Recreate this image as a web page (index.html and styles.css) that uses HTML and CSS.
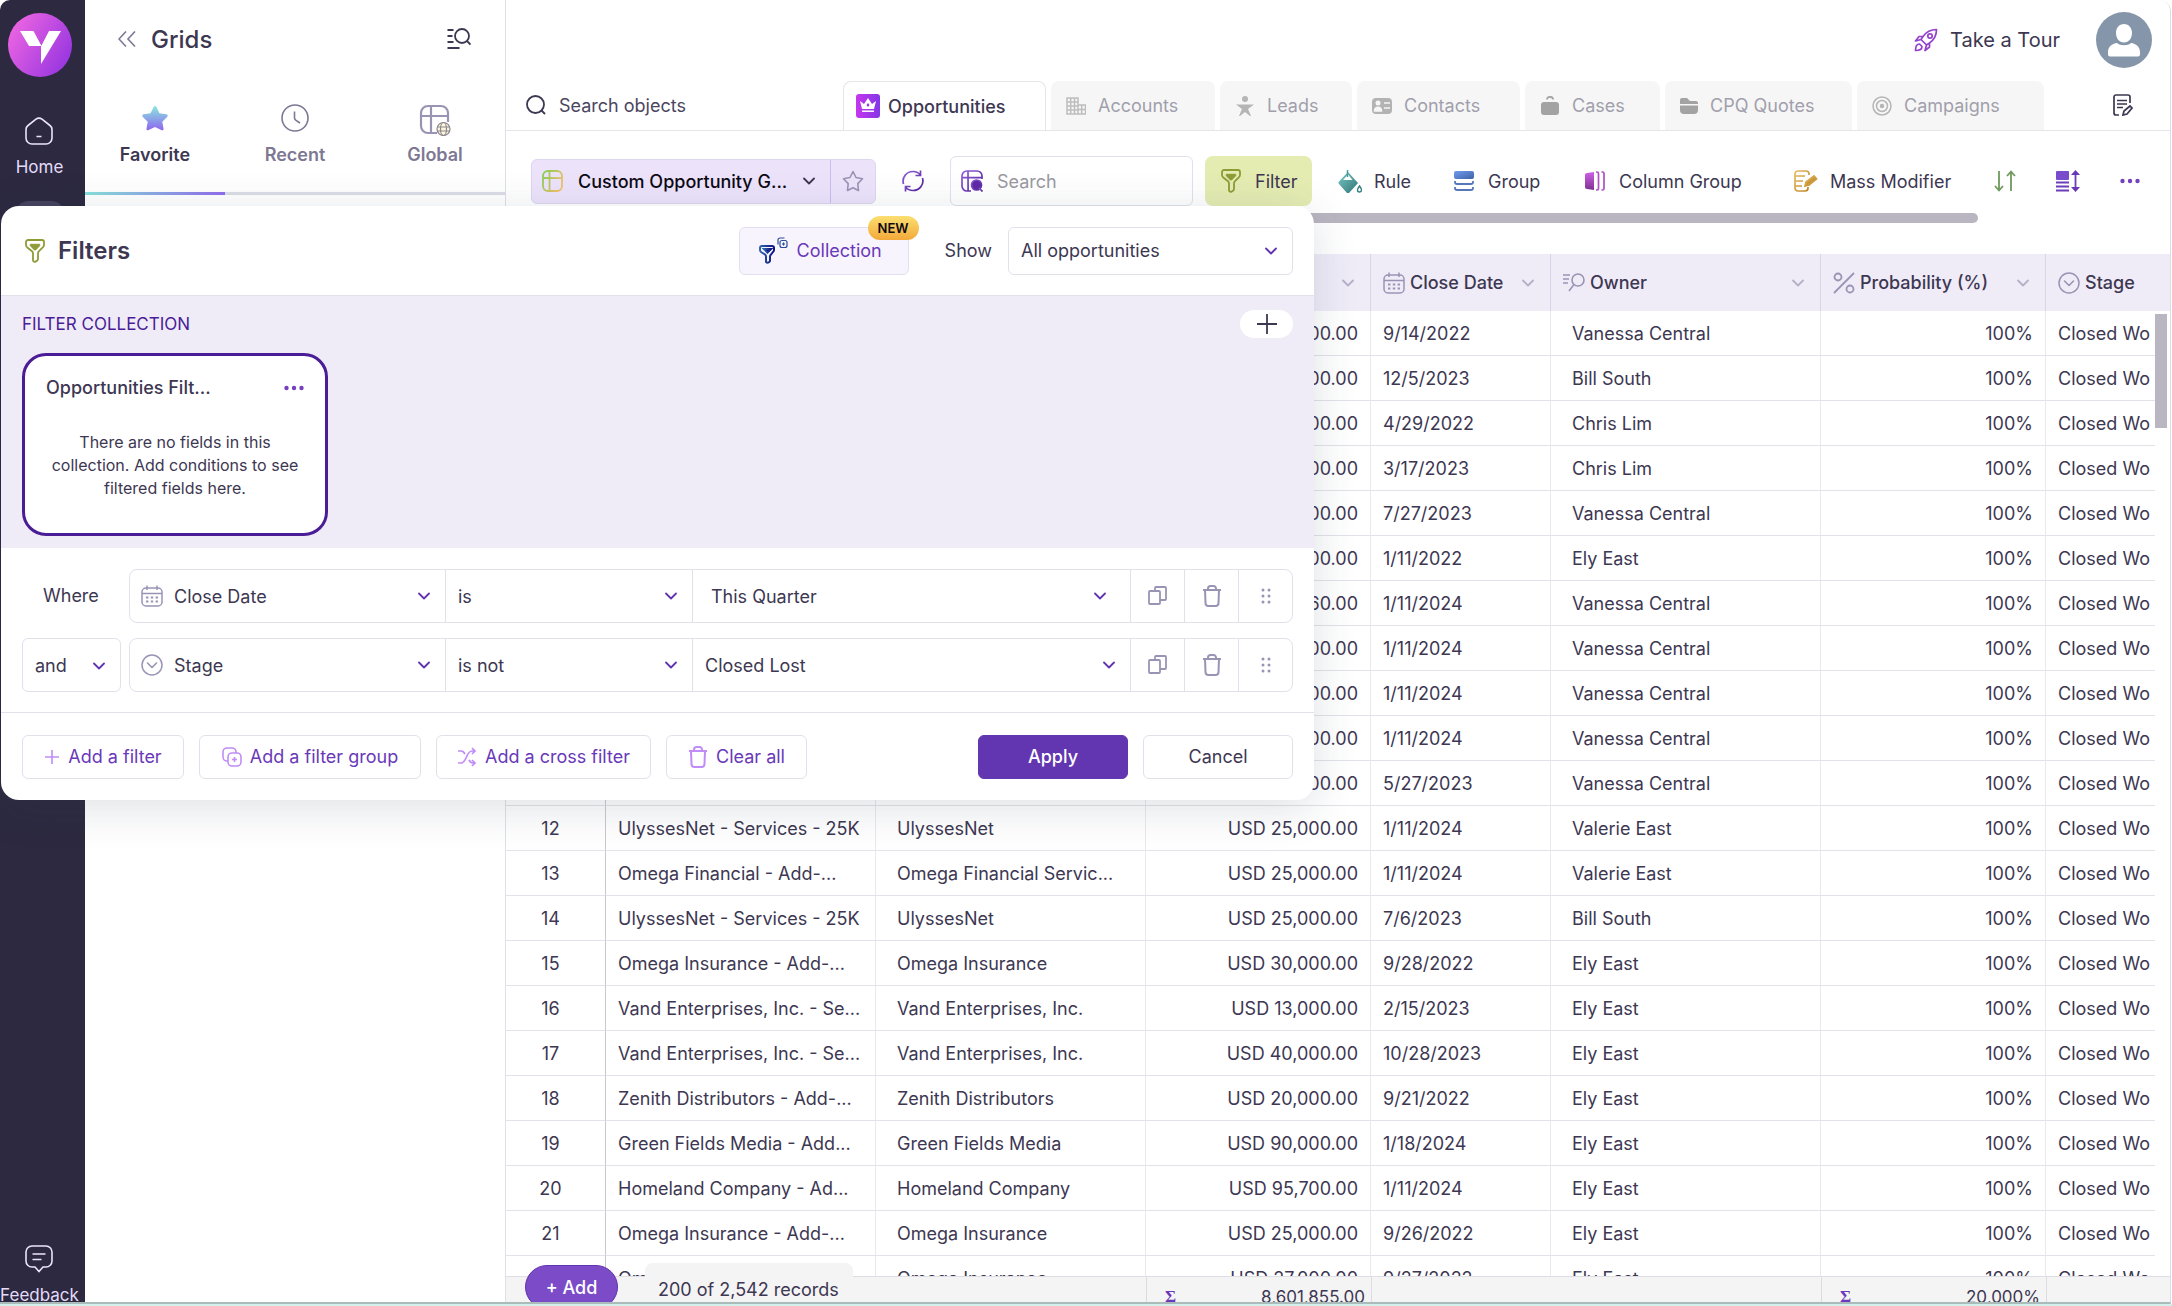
FILE: index.html
```
<!DOCTYPE html>
<html lang="en">

<head>
    <meta charset="utf-8">
    <title>Grids</title>
    <meta name="viewport" content="width=device-width, initial-scale=1">
    <link rel="stylesheet" href="styles.css">
</head>

<body>
    <!-- shared icons -->
    <svg class="defs" width="0" height="0">
        <defs>
            <linearGradient id="g-logo" x1="0" y1="0.2" x2="1" y2="0.8"><stop offset="0" stop-color="#ef66e2"/><stop offset="1" stop-color="#9434e0"/></linearGradient>
            <linearGradient id="g-star" x1="0" y1="0" x2="0" y2="1"><stop offset="0" stop-color="#88e8de"/><stop offset="1" stop-color="#8f66f0"/></linearGradient>
            <linearGradient id="g-crown" x1="0" y1="0" x2="1" y2="0"><stop offset="0" stop-color="#c636f0"/><stop offset="1" stop-color="#8338e6"/></linearGradient>
            <linearGradient id="g-grid" x1="0" y1="0" x2="1" y2="0.6"><stop offset="0" stop-color="#80cf52"/><stop offset="1" stop-color="#efbf67"/></linearGradient>
            <linearGradient id="g-purple" x1="0" y1="0" x2="1" y2="1"><stop offset="0" stop-color="#8f5fdc"/><stop offset="1" stop-color="#552199"/></linearGradient>
            <linearGradient id="g-teal" x1="0" y1="0" x2="1" y2="1"><stop offset="0" stop-color="#7cc6c6"/><stop offset="1" stop-color="#2f7676"/></linearGradient>
            <linearGradient id="g-blue" x1="0" y1="0" x2="1" y2="1"><stop offset="0" stop-color="#6f9bef"/><stop offset="1" stop-color="#3f62a5"/></linearGradient>
            <linearGradient id="g-pink" x1="0" y1="0" x2="0" y2="1"><stop offset="0" stop-color="#cf60e6"/><stop offset="1" stop-color="#7f3190"/></linearGradient>
            <linearGradient id="g-gold" x1="0" y1="0" x2="1" y2="1"><stop offset="0" stop-color="#e5bb62"/><stop offset="1" stop-color="#bd8424"/></linearGradient>
            <linearGradient id="g-navy" x1="0" y1="0" x2="1" y2="0"><stop offset="0" stop-color="#2f66a8"/><stop offset="1" stop-color="#0d1282"/></linearGradient>
        </defs>
        <symbol id="chevron" viewBox="0 0 12 8"><path d="M1 1.5l5 5 5-5" fill="none" stroke="currentColor" stroke-width="1.800" stroke-linecap="round" stroke-linejoin="round"/></symbol>
        <symbol id="funnel" viewBox="0 0 20 24"><path d="M3 1h14a2 2 0 0 1 2 2v3a3 3 0 0 1-1 2.200l-4 4a3 3 0 0 0-1 2.200V20a2 2 0 0 1-1 1.700l-1.500.9A1.700 1.700 0 0 1 8 21v-6.600a3 3 0 0 0-1-2.200L2 8.200A3 3 0 0 1 1 6V3a2 2 0 0 1 2-2z" fill="none" stroke="currentColor" stroke-width="1.800"/><path d="M5.300 5.300h9.400v1.400L10.600 11H9.400L5.300 6.700z" fill="currentColor" stroke="currentColor"/></symbol>
        <symbol id="calendar" viewBox="0 0 22 22"><path d="M5 3h12a4 4 0 0 1 4 4v10a4 4 0 0 1-4 4H5a4 4 0 0 1-4-4V7a4 4 0 0 1 4-4zM1 8.500h20M6 .5V5M16 .5V5" fill="none" stroke="currentColor" stroke-width="1.500"/><path d="M5 12.500h12M5 16.500h12" stroke="currentColor" stroke-width="1.800" stroke-dasharray="2.400 2.400"/></symbol>
        <symbol id="picklist" viewBox="0 0 22 22"><circle cx="11" cy="11" r="10" fill="none" stroke="currentColor" stroke-width="1.500"/><path d="M6.500 9l4.500 4.500L15.500 9" fill="none" stroke="currentColor" stroke-width="1.600" stroke-linecap="round" stroke-linejoin="round"/></symbol>
        <symbol id="copy" viewBox="0 0 20 20"><path d="M2 5h9a1 1 0 0 1 1 1v11a1 1 0 0 1-1 1H2a1 1 0 0 1-1-1V6a1 1 0 0 1 1-1zM7 5V2a1 1 0 0 1 1-1h9a1 1 0 0 1 1 1v11a1 1 0 0 1-1 1h-5" fill="none" stroke="currentColor" stroke-width="1.800"/></symbol>
        <symbol id="trash" viewBox="0 0 20 22"><path d="M1 5h18M3 5l.5 13a3 3 0 0 0 3 3h7a3 3 0 0 0 3-3L17 5M6 5V3.500A2.500 2.500 0 0 1 8.500 1h3A2.500 2.500 0 0 1 14 3.500V5" fill="none" stroke="currentColor" stroke-width="2"/></symbol>
        <symbol id="drag" viewBox="0 0 10 16"><g fill="currentColor"><circle cx="2" cy="2" r="1.500"/><circle cx="8" cy="2" r="1.500"/><circle cx="2" cy="8" r="1.500"/><circle cx="8" cy="8" r="1.500"/><circle cx="2" cy="14" r="1.500"/><circle cx="8" cy="14" r="1.500"/></g></symbol>
        <symbol id="dots" viewBox="0 0 20 6"><g fill="#7440bd"><circle cx="2.500" cy="3" r="2.200"/><circle cx="10" cy="3" r="2.200"/><circle cx="17.500" cy="3" r="2.200"/></g></symbol>
    </svg>

    <div class="app">
        <nav class="sidebar">
            <a href="#" class="logo" aria-label="Start page">
                <svg width="64" height="64" viewBox="0 0 64 64"><circle cx="32" cy="32" r="32" fill="url(#g-logo)"/><path d="M12 18h13.500l8 15H21zM41 18h12L33 51V33.500z" fill="#fff"/></svg>
            </a>
            <a href="#" class="nav-item">
                <svg width="28" height="28" viewBox="0 0 28 28" fill="none" stroke="#ece4fb" stroke-width="1.600"><path d="M1 12.500a5 5 0 0 1 2-4l8-6.300a5 5 0 0 1 6 0l8 6.300a5 5 0 0 1 2 4V21a6 6 0 0 1-6 6H7a6 6 0 0 1-6-6z"/><path d="M11.500 19.500h5"/></svg>
                Home
            </a>
            <div class="nav-active"></div>
            <a href="#" class="nav-item feedback">
                <svg width="28" height="28" viewBox="0 0 28 28" fill="none" stroke="#ece4fb" stroke-width="1.600"><path d="M7 1h14a6 6 0 0 1 6 6v9a6 6 0 0 1-6 6h-3l-4 4.500-4-4.500H7a6 6 0 0 1-6-6V7a6 6 0 0 1 6-6zM7.500 9h13M7.500 14.500h9"/></svg>
                Feedback
            </a>
        </nav>

        <aside class="panel">
            <div class="panel-head">
                <button class="icon-btn" aria-label="Collapse"><svg width="18" height="16" viewBox="0 0 18 16" fill="none" stroke="#7d7893" stroke-width="1.600"><path d="M8 .5L1 8l7 7.500M17 .5L10 8l7 7.500"/></svg></button>
                <h1>Grids</h1>
                <button class="icon-btn push" aria-label="Find grid"><svg width="24" height="22" viewBox="0 0 24 22" fill="none" stroke="#3d3752" stroke-width="1.800"><circle cx="15" cy="8" r="7"/><path d="M20 13l3.500 3.500M.5 2h6M.5 8h5M.5 14h6M.5 20h12"/></svg></button>
            </div>
            <div class="panel-tabs">
                <button class="panel-tab active">
                    <svg width="28" height="28" viewBox="0 0 28 28"><path d="M14 2c.8 0 1.200.6 1.600 1.400l2.900 5.900 6.600 1c1.700.2 2.200 1.500 1 2.700l-4.800 4.700 1.200 6.700c.2 1.600-.7 2.300-2.200 1.600L14 23l-6.300 3c-1.500.7-2.400 0-2.200-1.600l1.200-6.700L1.900 13c-1.200-1.200-.7-2.500 1-2.700l6.600-1 2.900-5.900C12.800 2.600 13.200 2 14 2z" fill="url(#g-star)"/></svg>
                    Favorite
                </button>
                <button class="panel-tab">
                    <svg width="28" height="28" viewBox="0 0 28 28" fill="none" stroke="#7d7893" stroke-width="1.600"><circle cx="14" cy="14" r="13"/><path d="M13.500 7.500V14c0 1 .5 1.500 1.500 2.300l4 2.700"/></svg>
                    Recent
                </button>
                <button class="panel-tab">
                    <svg width="32" height="32" viewBox="0 0 32 32" fill="none" stroke="#9a94b4" stroke-width="2.200"><path d="M18 29H9a7 7 0 0 1-7-7V9a7 7 0 0 1 7-7h13a7 7 0 0 1 7 7v9M2 12h27M12 2v27"/><g stroke="#8c8590" stroke-width="1.200"><circle cx="24.500" cy="25" r="6.500" fill="#fbf6dc"/><ellipse cx="24.500" cy="25" rx="3" ry="6.500"/><path d="M18.500 23h12M18.500 27h12"/></g></svg>
                    Global
                </button>
            </div>
        </aside>

        <main class="main">
            <header class="topbar">
                <a href="#" class="tour">
                    <svg width="24" height="24" viewBox="0 0 24 24" fill="none" stroke="#9442cc" stroke-width="1.700" stroke-linejoin="round"><path d="M22.500 1.500c-6 0-10 2-13.500 7l-2 3 5.500 5.500 3-2c5-3.500 7-7.500 7-13.500zM9 8.500H5L1.500 13l5.500-1.500M15.500 15v4L11 22.500 12.500 17M5.500 16c-3 0-4 2.500-4 6.500 4 0 6.500-1 6.500-4z"/><circle cx="16" cy="8" r="2.200"/></svg>
                    Take a Tour
                </a>
                <button class="avatar" aria-label="Profile">
                    <svg width="56" height="56" viewBox="0 0 56 56"><circle cx="28" cy="28" r="28" fill="#8696aa"/><path d="M28 12c5 0 8 4 8 9s-3 9.500-8 9.500-8-4.500-8-9.500 3-9 8-9zM21 31c3 3 11 3 14 0 5 .5 9 4 9 9v2.500a2 2 0 0 1-2 2H14a2 2 0 0 1-2-2V40c0-5 4-8.500 9-9z" fill="#fff"/></svg>
                </button>
            </header>

            <div class="objects">
                <label class="object-search">
                    <svg width="20" height="20" viewBox="0 0 20 20" fill="none" stroke="#3d3752" stroke-width="1.800"><circle cx="9.500" cy="9.500" r="8.500"/><path d="M15.500 15.500L19 19"/></svg>
                    <input type="text" placeholder="Search objects" aria-label="Search objects">
                </label>
                <nav class="object-tabs">
                    <a href="#" class="tab active tab-opps">
                        <svg width="24" height="24" viewBox="0 0 24 24"><rect width="24" height="24" rx="3" fill="url(#g-crown)"/><path d="M4 7l4 3 4-6 4 6 4-3-2 8H6z" fill="#fff"/><path d="M6 17.200h12" stroke="#fff" stroke-width="1.500"/><path d="M12 9l1.500 2-1.500 2-1.500-2z" fill="#8f38e6"/></svg>
                        Opportunities
                    </a>
                    <a href="#" class="tab tab-accounts">
                        <svg width="20" height="20" viewBox="0 0 20 20" fill="none" stroke="#bdbdbd" stroke-width="1.500"><path d="M1 2h11v16H1zM1 6h11M1 10h11M1 14h11M4.700 2v16M8.500 2v16"/><path d="M12 9h7.500v9H12M12 13.500h7.500M15.700 9v9"/></svg>
                        Accounts
                    </a>
                    <a href="#" class="tab tab-leads">
                        <svg width="20" height="20" viewBox="0 0 20 20" fill="#b5b5b5"><circle cx="10" cy="3" r="3"/><path d="M1 8.500h18l-6 4.500 3 7h-1L10 16l-5 4H4l3-7z"/></svg>
                        Leads
                    </a>
                    <a href="#" class="tab tab-contacts">
                        <svg width="20" height="20" viewBox="0 0 20 20"><rect x="0" y="2" width="20" height="16" rx="4" fill="#b3b3b3"/><circle cx="6" cy="7" r="2.500" fill="#f6f6f6"/><path d="M2.500 15c0-5 7-5 7 0zM12 7h6M12 12h6" fill="#f6f6f6" stroke="#f6f6f6" stroke-width="1.500"/></svg>
                        Contacts
                    </a>
                    <a href="#" class="tab tab-cases">
                        <svg width="20" height="20" viewBox="0 0 20 20"><rect x="1" y="6" width="18" height="13" rx="3" fill="#a3a3a3"/><path d="M7 3.500C7 0 13 0 13 3.500" fill="none" stroke="#a3a3a3" stroke-width="1.800"/></svg>
                        Cases
                    </a>
                    <a href="#" class="tab tab-quotes">
                        <svg width="18" height="20" viewBox="0 0 18 20" fill="#a3a3a3"><path d="M0 8V4a2 2 0 0 1 2-2h5l3 3h6a2 2 0 0 1 2 2v1zM0 9.500h18V14a4 4 0 0 1-4 4H4a4 4 0 0 1-4-4z"/></svg>
                        CPQ Quotes
                    </a>
                    <a href="#" class="tab tab-campaigns">
                        <svg width="20" height="20" viewBox="0 0 20 20" fill="none" stroke="#b5b5b5" stroke-width="1.500"><circle cx="10" cy="10" r="9"/><circle cx="10" cy="10" r="5.500"/><circle cx="10" cy="10" r="1.500" fill="#b5b5b5"/></svg>
                        Campaigns
                    </a>
                </nav>
                <button class="icon-btn edit-tabs" aria-label="Edit tabs">
                    <svg width="20" height="22" viewBox="0 0 20 22" fill="none" stroke="#3d3752" stroke-width="1.700"><path d="M6 21H3a2 2 0 0 1-2-2V3a2 2 0 0 1 2-2h12a2 2 0 0 1 2 2v6M4 6.500h10M4 10h10M4 13.500h6M10 21l1-4 6-5 2 2-5 6z"/></svg>
                </button>
            </div>

            <div class="toolbar">
                <div class="grid-picker">
                    <button class="grid-name">
                        <svg width="22" height="22" viewBox="0 0 22 22" fill="none" stroke="url(#g-grid)" stroke-width="1.800"><rect x="1" y="1" width="19" height="20" rx="5"/><path d="M7.500 1l.1 20M1 8l19 .1"/></svg>
                        <span>Custom Opportunity G...</span>
                        <svg width="12" height="8" class="dark"><use href="#chevron"/></svg>
                    </button>
                    <button class="grid-fav" aria-label="Add to favorites">
                        <svg width="22" height="22" viewBox="0 0 22 22" fill="none" stroke="#9a94b4" stroke-width="1.600" stroke-linejoin="round"><path d="M11 1.500l3 6 6.500 1.300-4.700 4.800.7 6.900L11 17.800l-5.500 2.700.7-6.900L1.500 8.800 8 7.500z"/></svg>
                    </button>
                </div>
                <button class="icon-btn" aria-label="Refresh">
                    <svg width="22" height="22" viewBox="0 0 22 22" fill="none" stroke="url(#g-purple)" stroke-width="1.700"><path d="M1.500 14C-.5 7 5 1.500 11 1.500c3 0 5.500 1 7.500 3.500M18.500.5v5h-5M20.500 8c2 7-3.500 12.500-9.500 12.500-3 0-5.500-1-7.500-3.500M3.500 21.500v-5h5"/></svg>
                </button>
                <label class="search">
                    <svg width="22" height="22" viewBox="0 0 22 22" fill="none" stroke="url(#g-purple)" stroke-width="1.700"><path d="M10 21H6a5 5 0 0 1-5-5V6a5 5 0 0 1 5-5h10a5 5 0 0 1 5 5v3M1 7.500l20 .1M7 1l.1 20"/><circle cx="15.500" cy="15" r="5" fill="#5d2aa5"/><path d="M18 18l3.500 3.500"/></svg>
                    <input type="text" placeholder="Search" aria-label="Search records">
                </label>
                <div class="tools">
                    <button class="tool filter"><svg width="20" height="24" class="olive"><use href="#funnel"/></svg>Filter</button>
                    <button class="tool rule">
                        <svg width="24" height="24" viewBox="0 0 24 24"><path d="M10 3l10 11-8.500 9.500a2 2 0 0 1-3 0L1 15a2 2 0 0 1 0-2.500z" fill="url(#g-teal)"/><path d="M10 5.500l4.500 5.500L5 11z" fill="#fff"/><path d="M9.500 8V1" stroke="#4c9a9a" stroke-width="1.500"/><path d="M21.500 17c1.500 2 2 3 2 4a2 2 0 0 1-4 0c0-1 .5-2 2-4z" fill="#fff" stroke="#357f80" stroke-width="1.400"/></svg>Rule
                    </button>
                    <button class="tool group">
                        <svg width="20" height="20" viewBox="0 0 20 20"><rect width="20" height="8" rx="2" fill="url(#g-blue)"/><path d="M1 10v1a2 2 0 0 0 2 2h14a2 2 0 0 0 2-2v-1M1 16v1a2 2 0 0 0 2 2h14a2 2 0 0 0 2-2v-1" fill="none" stroke="#5678bb" stroke-width="1.800"/></svg>Group
                    </button>
                    <button class="tool col-group">
                        <svg width="20" height="20" viewBox="0 0 20 20"><path d="M2 2l7-1v18l-7-1a2 2 0 0 1-2-2V4a2 2 0 0 1 2-2z" fill="url(#g-pink)"/><path d="M11 1h1a1.500 1.500 0 0 1 1.500 1.500v15A1.500 1.500 0 0 1 12 19h-1M16.500 1h1A1.500 1.500 0 0 1 19 2.500v15a1.500 1.500 0 0 1-1.500 1.500h-1" fill="none" stroke="#b04fc4" stroke-width="1.700"/></svg>Column Group
                    </button>
                    <button class="tool modifier">
                        <svg width="24" height="22" viewBox="0 0 24 22" fill="none" stroke="url(#g-gold)" stroke-width="1.700"><path d="M14 17v1a3 3 0 0 1-3 3H4a3 3 0 0 1-3-3V4a3 3 0 0 1 3-3h8a3 3 0 0 1 3 3v1M1 6h10M1 11h8M1 16h7"/><path d="M11 16l1-4 8-6 2.500 3-7.500 6z" fill="#c99736"/></svg>Mass Modifier
                    </button>
                </div>
                <button class="icon-btn" aria-label="Sort">
                    <svg width="22" height="22" viewBox="0 0 22 22" fill="none" stroke="#6e9a5d" stroke-width="1.800"><path d="M5 1v19M1 16l4 4.500L9 16M17 21V2M13 6l4-4.500L21 6"/></svg>
                </button>
                <button class="icon-btn" aria-label="Row height">
                    <svg width="24" height="22" viewBox="0 0 24 22"><rect y="1" width="13" height="9" rx="1" fill="#7a4bcb"/><path d="M0 12.500h13M0 16.500h13M0 20.500h13M19.500 4v14" stroke="#6c3cbb" stroke-width="1.800"/><path d="M15 5l4.500-5L24 5zM15 17l4.500 5 4.500-5z" fill="#6936b5"/></svg>
                </button>
                <button class="icon-btn" aria-label="More actions"><svg width="20" height="6"><use href="#dots"/></svg></button>
                <div class="tool-edge"></div>
            </div>

            <div class="hscroll"><div class="hscroll-thumb"></div></div>

            <div class="grid">
                <table>
                    <colgroup>
                        <col class="c-num"><col class="c-name"><col class="c-account"><col class="c-amount"><col class="c-date"><col class="c-owner"><col class="c-prob"><col><col class="c-scroll">
                    </colgroup>
                    <thead>
                        <tr>
                            <th></th>
                            <th></th>
                            <th></th>
                            <th><div class="th"><svg class="more" width="12" height="8"><use href="#chevron"/></svg></div></th>
                            <th><div class="th"><svg width="22" height="22"><use href="#calendar"/></svg>Close Date<svg class="more" width="12" height="8"><use href="#chevron"/></svg></div></th>
                            <th><div class="th"><svg width="22" height="20" viewBox="0 0 22 20" fill="none" stroke="currentColor" stroke-width="1.600"><circle cx="15" cy="7" r="6"/><path d="M11 11.500L6 18M0 2h7M0 6h6M0 10h5"/></svg>Owner<svg class="more" width="12" height="8"><use href="#chevron"/></svg></div></th>
                            <th><div class="th"><svg width="22" height="22" viewBox="0 0 22 22" fill="none" stroke="currentColor" stroke-width="1.800"><circle cx="5" cy="5" r="3.500"/><circle cx="17" cy="17" r="3.500"/><path d="M21 1L1 21"/></svg>Probability (%)<svg class="more" width="12" height="8"><use href="#chevron"/></svg></div></th>
                            <th colspan="2"><div class="th"><svg width="22" height="22"><use href="#picklist"/></svg>Stage</div></th>
                        </tr>
                    </thead>
                    <tbody>
                        <tr><td></td><td></td><td></td><td>000.00</td><td>9/14/2022</td><td>Vanessa Central</td><td>100%</td><td>Closed Wo</td><td></td></tr>
                        <tr><td></td><td></td><td></td><td>000.00</td><td>12/5/2023</td><td>Bill South</td><td>100%</td><td>Closed Wo</td><td></td></tr>
                        <tr><td></td><td></td><td></td><td>000.00</td><td>4/29/2022</td><td>Chris Lim</td><td>100%</td><td>Closed Wo</td><td></td></tr>
                        <tr><td></td><td></td><td></td><td>000.00</td><td>3/17/2023</td><td>Chris Lim</td><td>100%</td><td>Closed Wo</td><td></td></tr>
                        <tr><td></td><td></td><td></td><td>000.00</td><td>7/27/2023</td><td>Vanessa Central</td><td>100%</td><td>Closed Wo</td><td></td></tr>
                        <tr><td></td><td></td><td></td><td>000.00</td><td>1/11/2022</td><td>Ely East</td><td>100%</td><td>Closed Wo</td><td></td></tr>
                        <tr><td></td><td></td><td></td><td>060.00</td><td>1/11/2024</td><td>Vanessa Central</td><td>100%</td><td>Closed Wo</td><td></td></tr>
                        <tr><td></td><td></td><td></td><td>000.00</td><td>1/11/2024</td><td>Vanessa Central</td><td>100%</td><td>Closed Wo</td><td></td></tr>
                        <tr><td></td><td></td><td></td><td>000.00</td><td>1/11/2024</td><td>Vanessa Central</td><td>100%</td><td>Closed Wo</td><td></td></tr>
                        <tr><td></td><td></td><td></td><td>000.00</td><td>1/11/2024</td><td>Vanessa Central</td><td>100%</td><td>Closed Wo</td><td></td></tr>
                        <tr><td></td><td></td><td></td><td>000.00</td><td>5/27/2023</td><td>Vanessa Central</td><td>100%</td><td>Closed Wo</td><td></td></tr>
                        <tr><td>12</td><td>UlyssesNet - Services - 25K</td><td>UlyssesNet</td><td>USD 25,000.00</td><td>1/11/2024</td><td>Valerie East</td><td>100%</td><td>Closed Wo</td><td></td></tr>
                        <tr><td>13</td><td>Omega Financial - Add-...</td><td>Omega Financial Servic...</td><td>USD 25,000.00</td><td>1/11/2024</td><td>Valerie East</td><td>100%</td><td>Closed Wo</td><td></td></tr>
                        <tr><td>14</td><td>UlyssesNet - Services - 25K</td><td>UlyssesNet</td><td>USD 25,000.00</td><td>7/6/2023</td><td>Bill South</td><td>100%</td><td>Closed Wo</td><td></td></tr>
                        <tr><td>15</td><td>Omega Insurance - Add-...</td><td>Omega Insurance</td><td>USD 30,000.00</td><td>9/28/2022</td><td>Ely East</td><td>100%</td><td>Closed Wo</td><td></td></tr>
                        <tr><td>16</td><td>Vand Enterprises, Inc. - Se...</td><td>Vand Enterprises, Inc.</td><td>USD 13,000.00</td><td>2/15/2023</td><td>Ely East</td><td>100%</td><td>Closed Wo</td><td></td></tr>
                        <tr><td>17</td><td>Vand Enterprises, Inc. - Se...</td><td>Vand Enterprises, Inc.</td><td>USD 40,000.00</td><td>10/28/2023</td><td>Ely East</td><td>100%</td><td>Closed Wo</td><td></td></tr>
                        <tr><td>18</td><td>Zenith Distributors - Add-...</td><td>Zenith Distributors</td><td>USD 20,000.00</td><td>9/21/2022</td><td>Ely East</td><td>100%</td><td>Closed Wo</td><td></td></tr>
                        <tr><td>19</td><td>Green Fields Media - Add...</td><td>Green Fields Media</td><td>USD 90,000.00</td><td>1/18/2024</td><td>Ely East</td><td>100%</td><td>Closed Wo</td><td></td></tr>
                        <tr><td>20</td><td>Homeland Company - Ad...</td><td>Homeland Company</td><td>USD 95,700.00</td><td>1/11/2024</td><td>Ely East</td><td>100%</td><td>Closed Wo</td><td></td></tr>
                        <tr><td>21</td><td>Omega Insurance - Add-...</td><td>Omega Insurance</td><td>USD 25,000.00</td><td>9/26/2022</td><td>Ely East</td><td>100%</td><td>Closed Wo</td><td></td></tr>
                        <tr><td></td><td>Omega Insurance - Add-...</td><td>Omega Insurance</td><td>USD 27,000.00</td><td>9/27/2022</td><td>Ely East</td><td>100%</td><td>Closed Wo</td><td></td></tr>
                    </tbody>
                </table>
                <div class="vscroll-thumb"></div>
            </div>

            <footer class="summary">
                <div class="sum sum-amount"><span class="sigma">Σ</span>8,601,855.00</div>
                <div class="sum sum-gap"></div>
                <div class="sum sum-prob"><span class="sigma">Σ</span>20,000%</div>
                <div class="sum sum-rest"></div>
                <button class="add-record">+ Add</button>
                <div class="record-count">200 of 2,542 records</div>
            </footer>
        </main>

        <section class="filters">
            <header class="filters-head">
                <svg width="20" height="24" class="olive"><use href="#funnel"/></svg>
                <h2>Filters</h2>
                <button class="collection">
                    <svg width="30" height="28" viewBox="0 0 30 28" fill="none" stroke="url(#g-navy)" stroke-width="2"><path d="M3 9h10a2 2 0 0 1 2 2v2a3 3 0 0 1-1 2l-2 2.500a3 3 0 0 0-1 2V24a2.500 2.500 0 0 1-4 1v-5.500a3 3 0 0 0-1-2L2 15a3 3 0 0 1-1-2v-2a2 2 0 0 1 2-2z"/><path d="M5 12h7L8.500 15.500z" fill="#0d1282"/><g stroke="#2a4c9a" stroke-width="1.200"><rect x="21" y="3.500" width="7" height="7" rx="2"/><path d="M19 7.500V3a2 2 0 0 1 2-2h4.500M24.500 5.500v3M23 7h3"/></g></svg>
                    Collection
                    <span class="badge">NEW</span>
                </button>
                <label for="show">Show</label>
                <div class="select boxed show-select">
                    <select id="show"><option>All opportunities</option></select>
                    <svg width="12" height="8"><use href="#chevron"/></svg>
                </div>
            </header>

            <div class="filter-collection">
                <div class="fc-head">
                    <h3>FILTER COLLECTION</h3>
                    <button class="fc-add" aria-label="Add collection"><svg width="20" height="20" viewBox="0 0 20 20" stroke="#3d3752" stroke-width="1.800"><path d="M10 0v20M0 10h20"/></svg></button>
                </div>
                <article class="fc-card">
                    <div class="fc-title">
                        <span>Opportunities Filt...</span>
                        <button class="icon-btn" aria-label="Collection menu"><svg width="20" height="6"><use href="#dots"/></svg></button>
                    </div>
                    <p>There are no fields in this collection. Add conditions to see filtered fields here.</p>
                </article>
            </div>

            <div class="conditions">
                <div class="condition">
                    <span class="where">Where</span>
                    <div class="rule-box">
                        <div class="select field">
                            <svg width="22" height="22" class="lead"><use href="#calendar"/></svg>
                            <select aria-label="Field"><option>Close Date</option></select>
                            <svg width="12" height="8"><use href="#chevron"/></svg>
                        </div>
                        <div class="select operator">
                            <select aria-label="Operator"><option>is</option></select>
                            <svg width="12" height="8"><use href="#chevron"/></svg>
                        </div>
                        <div class="select value period">
                            <select aria-label="Value"><option>This Quarter</option></select>
                            <svg width="12" height="8"><use href="#chevron"/></svg>
                        </div>
                        <button aria-label="Duplicate"><svg width="20" height="20"><use href="#copy"/></svg></button>
                        <button aria-label="Delete"><svg width="20" height="22"><use href="#trash"/></svg></button>
                        <button aria-label="Move"><svg width="10" height="16"><use href="#drag"/></svg></button>
                    </div>
                </div>
                <div class="condition">
                    <div class="select boxed logic">
                        <select aria-label="Logic"><option>and</option></select>
                        <svg width="12" height="8"><use href="#chevron"/></svg>
                    </div>
                    <div class="rule-box">
                        <div class="select field">
                            <svg width="22" height="22" class="lead"><use href="#picklist"/></svg>
                            <select aria-label="Field"><option>Stage</option></select>
                            <svg width="12" height="8"><use href="#chevron"/></svg>
                        </div>
                        <div class="select operator">
                            <select aria-label="Operator"><option>is not</option></select>
                            <svg width="12" height="8"><use href="#chevron"/></svg>
                        </div>
                        <div class="select value">
                            <select aria-label="Value"><option>Closed Lost</option></select>
                            <svg width="12" height="8"><use href="#chevron"/></svg>
                        </div>
                        <button aria-label="Duplicate"><svg width="20" height="20"><use href="#copy"/></svg></button>
                        <button aria-label="Delete"><svg width="20" height="22"><use href="#trash"/></svg></button>
                        <button aria-label="Move"><svg width="10" height="16"><use href="#drag"/></svg></button>
                    </div>
                </div>
            </div>

            <footer class="filters-foot">
                <button class="btn add-filter"><svg width="16" height="16" viewBox="0 0 16 16" stroke="currentColor" stroke-width="1.600"><path d="M8 1v14M1 8h14"/></svg>Add a filter</button>
                <button class="btn add-group"><svg width="20" height="20" viewBox="0 0 20 20" fill="none" stroke="currentColor" stroke-width="1.600"><rect x="6" y="6" width="13" height="13" rx="4"/><path d="M6 14H5a4 4 0 0 1-4-4V5a4 4 0 0 1 4-4h5a4 4 0 0 1 4 4v1M12.500 10v5M10 12.500h5"/></svg>Add a filter group</button>
                <button class="btn add-cross"><svg width="20" height="20" viewBox="0 0 20 20" fill="none" stroke="currentColor" stroke-width="1.700"><path d="M1 4h3c2 0 3 1 4 3M1 16h3c6 0 5-12 11-12h3M12 13c1 2 2 3 4 3h2M15 1l3 3-3 3M15 13l3 3-3 3"/></svg>Add a cross filter</button>
                <button class="btn clear"><svg width="20" height="22"><use href="#trash"/></svg>Clear all</button>
                <button class="btn apply">Apply</button>
                <button class="btn cancel">Cancel</button>
            </footer>
        </section>
    </div>
</body>

</html>
```
FILE: styles.css
```
* {
    box-sizing: border-box;
}

body {
    margin: 0;
    height: 100vh;
    overflow: hidden;
    padding-right: 1px;
    border-bottom: 2px solid #d3f0ec;
    background: #fff;
    font-family: Inter, "Noto Sans", sans-serif;
    font-size: 18px;
    color: #3d3752;
}

h1, h2, h3, p {
    margin: 0;
}

button, input, select {
    font: inherit;
    color: inherit;
    margin: 0;
    padding: 0;
    border: 0;
    outline: 0;
    background: none;
}

svg {
    flex: none;
}

a {
    color: inherit;
    text-decoration: none;
}

.defs {
    position: absolute;
}

.app {
    position: relative;
    display: flex;
    height: 100%;
    overflow: hidden;
    border-right: 1px solid #dcdce2;
    border-bottom: 2px solid #a9bcba;
    border-radius: 10px 12px 0 0;
}

.icon-btn {
    display: flex;
    align-items: center;
}

.push {
    margin-left: auto;
}

.olive {
    color: #8f9b35;
}

.dark {
    color: #3d3752;
}

/* left navigation */
.sidebar {
    flex: none;
    width: 85px;
    padding: 13px 6px 0 0;
    display: flex;
    flex-direction: column;
    align-items: center;
    background: #2c2940;
    overflow: hidden;
}

.logo {
    height: 64px;
    margin-bottom: 40px;
}

.nav-item {
    display: flex;
    flex-direction: column;
    align-items: center;
    gap: 12px;
    font-size: 17px;
    line-height: 20px;
    color: #e4dcf8;
}

.nav-active {
    width: 50px;
    height: 50px;
    margin-top: 24px;
    border-radius: 14px;
    background: #45415f;
}

.feedback {
    margin-top: auto;
    margin-bottom: -3px;
}

/* grids panel */
.panel {
    flex: none;
    width: 421px;
    border-right: 1px solid #dfdfe9;
    background: #fff;
}

.panel-head {
    display: flex;
    align-items: center;
    gap: 15px;
    height: 78px;
    padding: 0 34px 0 33px;
}

.panel-head h1 {
    font-size: 24px;
    font-weight: 500;
}

.panel-tabs {
    display: flex;
    height: 117px;
    border-bottom: 3px solid #dcdee6;
}

.panel-tab {
    flex: 1;
    display: flex;
    flex-direction: column;
    align-items: center;
    justify-content: space-between;
    padding: 26px 0 27px;
    height: 117px;
    font-weight: 600;
    line-height: 26px;
    color: #7d7893;
}

.panel-tab.active {
    color: #3d3752;
    border-bottom: 3px solid;
    border-image: linear-gradient(90deg, #88e2dc, #8f6cec) 1;
    padding-bottom: 24px;
}

/* main area */
.main {
    flex: 1;
    min-width: 0;
    display: flex;
    flex-direction: column;
    background: #fff;
}

.topbar {
    display: flex;
    align-items: center;
    justify-content: flex-end;
    gap: 36px;
    height: 80px;
    padding-right: 18px;
    flex: none;
}

.tour {
    display: flex;
    align-items: center;
    gap: 12px;
    font-size: 20px;
}

.avatar {
    display: flex;
}

.objects {
    flex: none;
    display: flex;
    align-items: center;
    height: 51px;
    padding-left: 20px;
    border-bottom: 1px solid #e6e6ea;
}

.object-search {
    width: 317px;
    display: flex;
    gap: 13px;
    align-items: center;
}

.object-search input {
    width: 200px;
}

.object-search input::placeholder {
    color: #4b4660;
    opacity: 1;
}

.object-tabs {
    display: flex;
    gap: 5px;
    align-self: flex-end;
    height: 49px;
}

.tab {
    display: flex;
    align-items: center;
    gap: 12px;
    padding-left: 15px;
    border-radius: 8px 8px 0 0;
    background: #f6f6f6;
    color: #a19fac;
    white-space: nowrap;
}

.tab.active {
    gap: 8px;
    padding-left: 12px;
    background: #fff;
    border: 1px solid #e6e6ea;
    border-bottom: 0;
    color: #3d3752;
    font-weight: 500;
}

.tab-opps {
    width: 203px;
}

.tab-accounts {
    width: 164px;
}

.tab-leads {
    width: 132px;
}

.tab-contacts {
    width: 163px;
}

.tab-cases {
    width: 135px;
}

.tab-quotes, .tab-campaigns {
    width: 187px;
}

.edit-tabs {
    margin-left: auto;
    margin-right: 37px;
}

/* toolbar */
.toolbar {
    flex: none;
    display: flex;
    align-items: center;
    height: 82px;
    padding: 18px 0 0 25px;
    gap: 26px;
}

.grid-picker {
    flex: none;
    display: flex;
    width: 345px;
    height: 45px;
    border: 1px solid #ddd6ef;
    border-radius: 6px;
    background: #ece3fb;
}

.grid-name {
    flex: 1;
    display: flex;
    align-items: center;
    gap: 14px;
    padding: 0 15px 0 10px;
    color: #0c0a14;
    font-weight: 500;
    white-space: nowrap;
}

.grid-name .dark {
    margin-left: auto;
}

.grid-fav {
    width: 45px;
    display: flex;
    align-items: center;
    justify-content: center;
    border-left: 1px solid #cdbdf0;
}

.search {
    flex: none;
    display: flex;
    align-items: center;
    gap: 14px;
    width: 243px;
    height: 50px;
    padding: 0 10px;
    border: 1px solid #e2e0ec;
    border-radius: 6px;
}

.search input {
    width: 100%;
}

.search input::placeholder {
    color: #9a99a0;
    opacity: 1;
}

.tools {
    flex: none;
    display: flex;
    gap: 10px;
    margin-left: -14px;
}

.tool {
    display: flex;
    align-items: center;
    gap: 14px;
    height: 50px;
    padding-left: 16px;
    border-radius: 8px;
    white-space: nowrap;
}

.filter {
    width: 107px;
    background: #e4ecb2;
}

.rule {
    width: 106px;
    gap: 12px;
}

.group {
    width: 121px;
}

.col-group {
    width: 199px;
}

.modifier {
    width: 190px;
    gap: 12px;
}

.tools ~ .icon-btn {
    margin-right: 14px;
}

.tool-edge {
    width: 12px;
    height: 45px;
    margin-left: auto;
    border-radius: 6px 0 0 6px;
    background: #eee;
}

.hscroll {
    flex: none;
    height: 41px;
}

.hscroll-thumb {
    width: 1472px;
    height: 10px;
    border-radius: 5px;
    background: #b9b6c1;
}

/* data grid */
.grid {
    position: relative;
    flex: 1;
    min-height: 0;
    overflow: hidden;
}

table {
    width: 100%;
    table-layout: fixed;
    border-collapse: separate;
    border-spacing: 0;
}

.c-num {
    width: 100px;
}

.c-name, .c-account, .c-owner {
    width: 270px;
}

.c-amount, .c-prob {
    width: 225px;
}

.c-date {
    width: 180px;
}

.c-scroll {
    width: 15px;
}

th {
    height: 57px;
    padding: 0 12px;
    background: #efecf8;
    border-right: 1px solid #d9d5e8;
    font-weight: 500;
    text-align: left;
}

.th {
    display: flex;
    align-items: center;
    gap: 5px;
    white-space: nowrap;
}

.th svg {
    color: #9a94b4;
}

.th .more {
    margin-left: auto;
    margin-right: 4px;
    color: #b5b0c8;
}

td {
    height: 45px;
    padding: 0 12px;
    overflow: hidden;
    white-space: nowrap;
    border-right: 1px solid #e9e8ee;
    border-bottom: 1px solid #e3e2e8;
}

th:last-child, td:nth-child(8), td:nth-child(9) {
    border-right: 0;
}

td:nth-child(8) {
    padding-right: 0;
}

td:nth-child(9) {
    border-bottom: 0;
}

td:nth-child(1) {
    text-align: center;
    padding-right: 22px;
    border-right-color: #c9c8d0;
}

td:nth-child(3), td:nth-child(6) {
    padding-left: 21px;
}

td:nth-child(4), td:nth-child(7) {
    text-align: right;
}

.vscroll-thumb {
    position: absolute;
    top: 60px;
    right: 3px;
    width: 12px;
    height: 114px;
    background: #b9b6c1;
}

.summary {
    position: relative;
    flex: none;
    display: flex;
    height: 26px;
    padding-left: 640px;
    border-top: 1px solid #dfdee5;
    background: #f4f4f4;
    font-size: 17px;
}

.sum {
    display: flex;
    justify-content: space-between;
    height: 25px;
    padding: 9px 6px 0 18px;
    border-left: 1px solid #dcdbe2;
    line-height: 22px;
    overflow: hidden;
}

.sum-amount, .sum-prob {
    width: 225px;
}

.sum-gap {
    width: 450px;
}

.sum-rest {
    flex: 1;
}

.sigma {
    color: #6a38b8;
    font-family: "Liberation Serif", serif;
    font-weight: bold;
}

.add-record {
    position: absolute;
    left: 19px;
    top: -12px;
    width: 93px;
    height: 44px;
    border: 1px solid #6233ae;
    border-radius: 22px;
    background: #7b4bc8;
    color: #fff;
    font-size: 18px;
    font-weight: 500;
}

.record-count {
    position: absolute;
    left: 139px;
    top: -14px;
    width: 208px;
    height: 50px;
    padding-left: 13px;
    border-radius: 8px;
    background: #f4f4f4;
    font-size: 18px;
    line-height: 53px;
}

/* filters popup */
.filters {
    position: absolute;
    left: 1px;
    top: 206px;
    width: 1313px;
    border-radius: 18px;
    background: #fff;
    box-shadow: 0 8px 44px rgba(50, 60, 90, 0.16);
    overflow: hidden;
}

.filters-head {
    display: flex;
    align-items: center;
    height: 90px;
    padding: 0 21px 0 24px;
    border-bottom: 1px solid #e3e2ea;
}

.filters-head h2 {
    margin-left: 13px;
    font-size: 24px;
    font-weight: 600;
}

.collection {
    position: relative;
    display: flex;
    align-items: center;
    gap: 8px;
    width: 170px;
    height: 48px;
    margin-left: auto;
    margin-right: 36px;
    padding-left: 19px;
    border: 1px solid #e2dff0;
    border-radius: 6px;
    background: #f7f4fd;
    color: #6a38b8;
}

.badge {
    position: absolute;
    right: -11px;
    top: -12px;
    width: 51px;
    height: 24px;
    border-radius: 12px;
    background: linear-gradient(#fbdf70, #f2a93a);
    color: #0c0a14;
    font-size: 13px;
    font-weight: 600;
    line-height: 24px;
    text-align: center;
}

/* native select with the arrow drawn over it */
.select {
    display: grid;
    align-items: center;
}

.select > * {
    grid-area: 1 / 1;
}

.select select {
    width: 100%;
    height: 100%;
    padding-left: 12px;
    appearance: none;
}

.select svg {
    justify-self: end;
    margin-right: 15px;
    color: #6233ae;
    pointer-events: none;
}

.boxed {
    border: 1px solid #e2e0ea;
    border-radius: 6px;
}

.show-select {
    width: 285px;
    height: 48px;
    margin-left: 16px;
}

.filter-collection {
    height: 252px;
    padding: 14px 21px 0;
    background: #efecf8;
}

.fc-head {
    display: flex;
    align-items: center;
    justify-content: space-between;
}

.fc-head h3 {
    font-size: 17px;
    font-weight: 400;
    color: #4a1c96;
}

.fc-add {
    display: flex;
    align-items: center;
    justify-content: center;
    width: 53px;
    height: 28px;
    border-radius: 14px;
    background: #fff;
}

.fc-card {
    width: 306px;
    height: 183px;
    margin-top: 15px;
    padding: 19px 21px;
    border: 3px solid #4a1c96;
    border-radius: 24px;
    background: #fff;
}

.fc-title {
    display: flex;
    align-items: center;
    justify-content: space-between;
    line-height: 26px;
    font-weight: 500;
}

.fc-card p {
    margin-top: 30px;
    font-size: 16px;
    line-height: 23px;
    text-align: center;
}

.conditions {
    display: flex;
    flex-direction: column;
    gap: 15px;
    padding: 21px 21px 20px;
    border-bottom: 1px solid #e3e2ea;
}

.condition {
    display: flex;
    gap: 8px;
    height: 54px;
}

.where, .logic {
    width: 99px;
    line-height: 54px;
}

.where {
    padding-left: 21px;
}

.logic select {
    padding-left: 12px;
}

.rule-box {
    flex: 1;
    display: flex;
    border: 1px solid #e2e0ea;
    border-radius: 8px;
}

.rule-box > * + * {
    border-left: 1px solid #e2e0ea;
}

.rule-box button {
    width: 54px;
    display: flex;
    align-items: center;
    justify-content: center;
    color: #9a94b4;
}

.rule-box .field {
    width: 315px;
}

.field select {
    padding-left: 44px;
}

.field .lead {
    justify-self: start;
    margin-left: 11px;
    color: #9a94b4;
}

.operator {
    width: 247px;
}

.value {
    flex: 1;
}

.period select {
    padding-left: 18px;
}

.period svg {
    margin-right: 24px;
}

.filters-foot {
    display: flex;
    align-items: center;
    gap: 15px;
    height: 87px;
    padding: 0 21px;
}

.btn {
    display: flex;
    align-items: center;
    justify-content: center;
    gap: 8px;
    height: 44px;
    border: 1px solid #e2e0ea;
    border-radius: 6px;
    color: #6a38b8;
    white-space: nowrap;
}

.btn svg {
    color: #c08cf7;
}

.add-filter {
    width: 162px;
}

.add-group {
    width: 222px;
}

.add-cross {
    width: 215px;
}

.clear {
    width: 141px;
}

.apply, .cancel {
    width: 150px;
}

.apply {
    margin-left: auto;
    border-color: #6236b0;
    background: #6236b0;
    color: #fff;
    font-weight: 500;
}

.cancel {
    color: #3d3752;
}
```
